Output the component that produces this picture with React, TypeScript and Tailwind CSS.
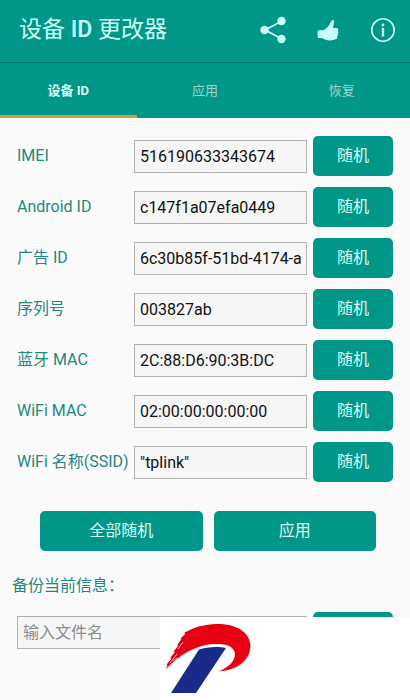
import { useState } from "react";

const initialFields = [
	{ id: "imei", label: "IMEI", value: "516190633343674" },
	{ id: "android-id", label: "Android ID", value: "c147f1a07efa0449" },
	{ id: "ad-id", label: "广告 ID", value: "6c30b85f-51bd-4174-a" },
	{ id: "serial", label: "序列号", value: "003827ab" },
	{ id: "bluetooth", label: "蓝牙 MAC", value: "2C:88:D6:90:3B:DC" },
	{ id: "wifi", label: "WiFi MAC", value: "02:00:00:00:00:00" },
	{ id: "ssid", label: "WiFi 名称(SSID)", value: '"tplink"' },
];

const tabs = ["设备 ID", "应用", "恢复"];

const inputStyle = "h-[33px] w-full min-w-0 border border-[#b2b2b2] bg-[#f6f6f6] px-[5px] text-base text-[#111] outline-none placeholder:text-[#8c8c8c]";
const buttonStyle = "h-10 cursor-pointer rounded-[5px] bg-[#019788] text-base text-[#dcfbf5]";

function Header() {
	return (
		<header className="flex h-[62px] items-center justify-between bg-[#019788] pr-[13px] pb-[2px] pl-[19px] text-[#c9fff6]">
			<h1 className="text-[23px] leading-8 font-normal">
				设备 <span className="font-medium">ID</span> 更改器
			</h1>
			<div className="flex items-center gap-[27px]">
				<button aria-label="分享" className="cursor-pointer">
					<svg className="size-7" viewBox="0 0 28 28" fill="currentColor">
						<path d="M23 5 6 14l17 9" fill="none" stroke="currentColor" strokeWidth="1.8" />
						<circle cx="22.5" cy="5" r="4.2" />
						<circle cx="5.5" cy="14" r="4.2" />
						<circle cx="22.5" cy="23" r="4.2" />
					</svg>
				</button>
				<button aria-label="点赞" className="cursor-pointer">
					<svg className="size-7" viewBox="0 0 28 28" fill="currentColor">
						<path d="M3.8 14.6 9.5 14c2.4-1.3 4.5-3.2 6-5.6l2-3.7c.8-1.2 2.6-.7 2.6.9 0 2.2-.7 4.3-1.5 6.2l4 .3c1.9.2 2.3 2.1 1.2 3 .9.8.8 2.1-.1 2.7.6.9.3 2-.6 2.5.5 1.2-.1 2.4-1.4 3-3.4 1.5-7.5 1.5-10.8.1-2.1-1.3-4.3-1.6-6.8-1.3-.7-2.4-.8-5-.3-7.5Z" />
					</svg>
				</button>
				<button aria-label="关于" className="cursor-pointer">
					<svg className="size-7" viewBox="0 0 28 28" fill="currentColor">
						<circle cx="14" cy="14" r="11.2" fill="none" stroke="currentColor" strokeWidth="1.6" />
						<circle cx="14" cy="9" r="1.4" />
						<path d="M12.8 12h2.4v8.5h-2.4z" />
					</svg>
				</button>
			</div>
		</header>
	);
}

function Logo() {
	return (
		<div className="fixed right-0 bottom-0 h-[83px] w-[250px] bg-white">
			<svg className="h-full w-[120px]" viewBox="0 0 120 83">
				<path fill="#192b88" d="M39 32.5C46 30 58 29 66 31L36 76H11Z" />
				<path fill="#e60012" d="M6 52 7.5 48 6.5 47.5 11 42 10.5 40.5 15 35 13.5 34.5 18 29 17.5 27.5 21.5 22 20.5 21.5 25 17 24.5 15.5 29 13.5C37 8.500 50 7 60 7 80 8 90 17 90.500 29 90 43 78 53 59 54.500 69 50 75 44 75 37 74 28 64 26.500 53 27 37 28 20 37 6 52Z" />
				<path fill="none" stroke="#fff" strokeWidth="0.7" d="m10 46 7-9M18 32l5-7M13 44l4-3" />
			</svg>
		</div>
	);
}

export default function App() {
	const [fields, setFields] = useState(initialFields);
	const [activeTab, setActiveTab] = useState(0);

	const update = (id: string, value: string) => setFields(fields.map((f) => (f.id === id ? { ...f, value } : f)));

	return (
		<div className="h-screen overflow-hidden bg-[#fafafa] font-['Roboto','Noto_Sans_CJK_SC',sans-serif]">
			<Header />

			<nav className="grid h-14 grid-cols-3 border-t border-[#08796e] bg-[#019788] text-[13px]">
				{tabs.map((tab, i) => (
					<button
						key={tab}
						onClick={() => setActiveTab(i)}
						className={i === activeTab ? "cursor-pointer border-b-3 border-[#cf9d3a] pt-[3px] font-bold text-[#dcfff9]" : "cursor-pointer border-b-3 border-transparent pt-[3px] text-[#98d6cd]"}>
						{tab}
					</button>
				))}
			</nav>

			<main className="px-[17px] pt-[18px] text-base text-[#24877d]">
				<div className="flex flex-col gap-[11px]">
					{fields.map((field) => (
						<div key={field.id} className="grid grid-cols-[117px_1fr_80px] items-center">
							<label htmlFor={field.id} className="whitespace-nowrap">
								{field.label}
							</label>
							<div className="flex pr-[6px]">
								<input id={field.id} value={field.value} onChange={(e) => update(field.id, e.target.value)} className={inputStyle} />
							</div>
							<button className={buttonStyle}>随机</button>
						</div>
					))}
				</div>

				<div className="grid grid-cols-2 gap-[11px] pt-[29px] pr-[17px] pl-[23px]">
					<button className={buttonStyle}>全部随机</button>
					<button className={buttonStyle}>应用</button>
				</div>

				<label htmlFor="backup-name" className="-ml-[5px] block pt-[23px] leading-6">
					备份当前信息：
				</label>
				<div className="grid grid-cols-[1fr_80px] items-center gap-[6px] pt-[14px]">
					<input id="backup-name" placeholder="输入文件名" className={inputStyle} />
					<button className={buttonStyle}>备份</button>
				</div>
			</main>

			<Logo />
		</div>
	);
}
